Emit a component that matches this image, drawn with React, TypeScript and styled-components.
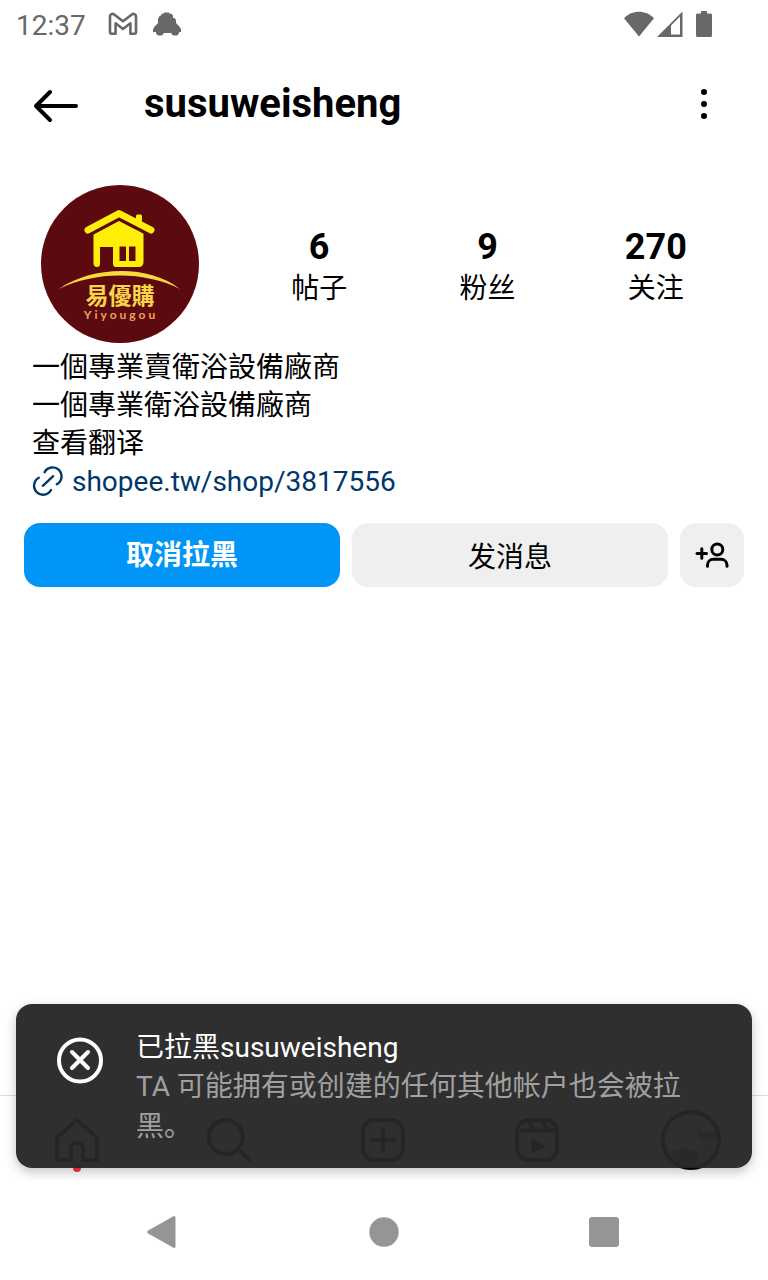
import React from 'react';
import styled, { createGlobalStyle } from 'styled-components';

const GlobalStyle = createGlobalStyle`
  *, *::before, *::after { box-sizing: border-box; }
  body {
    margin: 0;
    background: #fff;
    color: #000;
    font-family: Roboto, "Noto Sans CJK SC", sans-serif;
    font-size: 28px;
  }
  button {
    border: 0;
    padding: 0;
    background: none;
    color: inherit;
    font: inherit;
  }
  svg { display: block; flex: none; }
`;

const Screen = styled.div`
  display: flex;
  flex-direction: column;
  min-height: 100vh;
`;

const StatusBar = styled.div`
  display: flex;
  align-items: center;
  justify-content: space-between;
  height: 48px;
  padding: 0 56px 0 16px;
  color: #686868;
`;

const StatusGroup = styled.div<{ $gap: number }>`
  display: flex;
  align-items: center;
  gap: ${(p) => p.$gap}px;
`;

const Clock = styled.time`
  width: 78px;
  line-height: 46px;
  padding-top: 4px;
`;

const Header = styled.header`
  display: flex;
  align-items: center;
  height: 112px;
  padding: 0 40px 0 32px;
`;

const Title = styled.h1`
  flex: 1;
  margin: 0 0 0 64px;
  font-size: 40px;
  line-height: 48px;
  font-weight: 700;
`;

const IconButton = styled.button<{ $width: number }>`
  display: flex;
  align-items: center;
  justify-content: center;
  width: ${(p) => p.$width}px;
  height: 48px;
`;

const Summary = styled.section`
  display: flex;
  align-items: center;
  gap: 36px;
  padding: 25px 28px 0 41px;
`;

const Stats = styled.ul`
  flex: 1;
  display: grid;
  grid-template-columns: repeat(3, 1fr);
  margin: 0;
  padding: 8px 0 0;
  list-style: none;
  text-align: center;
`;

const StatValue = styled.strong`
  display: block;
  font-size: 36px;
  line-height: 42px;
  font-weight: 700;
`;

const StatLabel = styled.span`
  display: block;
  line-height: 42px;
`;

const Bio = styled.section`
  padding: 6px 32px 0;
`;

const BioLine = styled.p`
  margin: 0;
  line-height: 38px;
  font-family: Roboto, "Noto Sans CJK TC", sans-serif;
`;

const TranslateButton = styled.button`
  display: block;
  line-height: 38px;
`;

const SiteLink = styled.a`
  display: flex;
  width: fit-content;
  align-items: center;
  gap: 8px;
  line-height: 38px;
  color: #00376b;
  text-decoration: none;
`;

const Actions = styled.div`
  display: flex;
  gap: 12px;
  padding: 22px 24px 0;
`;

const ActionButton = styled.button<{ $primary?: boolean }>`
  flex: 1;
  height: 64px;
  padding-bottom: ${(p) => (p.$primary ? 4 : 0)}px;
  border-radius: 16px;
  background: ${(p) => (p.$primary ? '#0095f6' : '#efefef')};
  color: ${(p) => (p.$primary ? '#fff' : '#000')};
  font-weight: ${(p) => (p.$primary ? 700 : 400)};
`;

const SuggestButton = styled(ActionButton)`
  flex: 0 0 64px;
  display: flex;
  align-items: center;
  justify-content: center;
`;

const Footer = styled.footer`
  margin-top: auto;
`;

const TabBar = styled.nav`
  position: relative;
  display: grid;
  grid-template-columns: repeat(5, 1fr);
  align-items: center;
  justify-items: center;
  height: 89px;
  border-top: 1px solid #dbdbdb;
`;

const Tab = styled.button`
  position: relative;
  display: flex;
  align-items: center;
  justify-content: center;
  width: 60px;
  height: 60px;
`;

const UnreadDot = styled.span`
  position: absolute;
  bottom: -2px;
  left: 26px;
  width: 8px;
  height: 8px;
  border-radius: 50%;
  background: #ff3040;
`;

const Toast = styled.div`
  position: absolute;
  left: 16px;
  right: 16px;
  bottom: 16px;
  display: flex;
  gap: 32px;
  padding: 25px 48px 21px 40px;
  border-radius: 16px;
  background: rgba(38, 38, 38, 0.96);
  box-shadow: 0 4px 12px rgba(0, 0, 0, 0.24);
`;

const ToastIcon = styled.div`
  padding-top: 7px;
`;

const ToastTitle = styled.p`
  margin: 0;
  line-height: 38px;
  color: #fff;
`;

const ToastText = styled.p`
  margin: 0;
  line-height: 40px;
  color: #a0a0a0;
`;

const SystemNav = styled.nav`
  display: grid;
  grid-template-columns: repeat(3, 1fr);
  align-items: center;
  justify-items: center;
  height: 96px;
  padding: 0 52px;
  color: #959595;
`;

const MailIcon = () => (
  <svg width="30" height="24" viewBox="0 0 30 24" fill="none" stroke="currentColor" strokeWidth="2.6" strokeLinejoin="round">
    <path d="M2 4.5C2 2 4.5 1.200 6.500 2.700L15 9.300L23.500 2.700C25.500 1.200 28 2 28 4.500V20C28 21 27.300 21.700 26.300 21.700H22.400V11.300L15 17L7.600 11.300V21.700H3.700C2.700 21.700 2 21 2 20Z" />
  </svg>
);

const CarIcon = () => (
  <svg width="30" height="24" viewBox="0 0 30 24" fill="currentColor">
    <path d="M10 1.500H12V.5H17V1.500H19L21 3.500V6H22.500L24 8V11L27 14L29 17V20H27V21.500L25 23.500H21L19 21H12L10 23.500H6L4 21.500V20H1V17L3 14L6 11V7L7.500 4L9 3.500Z" />
  </svg>
);

const WifiIcon = () => (
  <svg width="30" height="26" viewBox="0 0 30 26" fill="currentColor">
    <path d="M0 7.200C8 -1.400 22 -1.400 30 7.200L15 25.500Z" />
  </svg>
);

const SignalIcon = () => (
  <svg width="26" height="26" viewBox="0 0 26 26">
    <path d="M0 26L25.500 .5V26Z" fill="currentColor" />
    <path d="M14 14.500L23 5.500V23.500H14Z" fill="#fff" />
  </svg>
);

const BatteryIcon = () => (
  <svg width="16" height="26" viewBox="0 0 16 26" fill="currentColor">
    <path d="M5 0H11V2.500H14.500Q16 2.500 16 4V24.500Q16 26 14.500 26H1.500Q0 26 0 24.500V4Q0 2.500 1.500 2.500H5Z" />
  </svg>
);

const BackIcon = () => (
  <svg width="48" height="44" viewBox="0 0 48 44" fill="none" stroke="currentColor" strokeWidth="4" strokeLinecap="round" strokeLinejoin="round">
    <path d="M18 10L4 24L18 38M4 24H44" />
  </svg>
);

const MoreIcon = () => (
  <svg width="48" height="48" viewBox="0 0 48 48" fill="currentColor">
    <circle cx="24" cy="12" r="3" />
    <circle cx="24" cy="24" r="3" />
    <circle cx="24" cy="36" r="3" />
  </svg>
);

const ShopAvatar = () => (
  <svg width="158" height="158" viewBox="0 0 158 158" role="img" aria-label="易優購 Yiyougou">
    <circle cx="79" cy="79" r="79" fill="#5c0a10" />
    <g fill="#ffee08">
      <path d="M95 38V31Q95 29.500 96.500 29.500H99.500Q101 29.500 101 31V41L95 38Z" />
      <path d="M47 45L78 28.500L110 45" fill="none" stroke="#ffee08" strokeWidth="7" strokeLinecap="round" strokeLinejoin="round" />
      <path d="M52.500 49L78 35.500L102.500 48V77Q102.500 82 97.500 82H75Q72 82 72 79V62H59V79Q59 82 56 82Q52.500 82 52.500 78Z" />
      <path d="M18 104C50 81 108 79 139 104C104 86 54 86 18 104Z" fill="#f8d93a" />
    </g>
    <path d="M49 50.500L78 35L107 50" fill="none" stroke="#5c0a10" strokeWidth="1.600" />
    <path d="M78.500 61.500H85V76H78.500ZM88 61.500H94.500V76H88Z" fill="#5c0a10" />
    <text x="79" y="119" textAnchor="middle" fontFamily="'Noto Sans CJK TC', sans-serif" fontSize="23" fontWeight="700" fill="#f8d548">易優購</text>
    <text x="80" y="134" textAnchor="middle" fontFamily="Lato, sans-serif" fontSize="12" fontWeight="700" letterSpacing="3" fill="#eda25a">Yiyougou</text>
  </svg>
);

const LinkIcon = () => (
  <svg width="32" height="32" viewBox="0 0 32 32" fill="none" stroke="currentColor" strokeWidth="2.4" strokeLinecap="round">
    <path d="M12.600 6.200A9 9 0 1 1 24.800 18.300" />
    <path d="M6.800 11.800A9 9 0 1 0 19 24" />
    <path d="M10.800 19.800L21.200 10.200" />
  </svg>
);

const AddPersonIcon = () => (
  <svg width="36" height="32" viewBox="0 0 36 32" fill="none" stroke="currentColor" strokeWidth="3" strokeLinecap="round">
    <path d="M3 14.500H12.500M7.800 9.800V19.300" />
    <circle cx="23.300" cy="10.500" r="5.500" />
    <path d="M13.500 27.200V26A5.800 5.800 0 0 1 19.300 20.300H27.200A5.800 5.800 0 0 1 33 26V27.200" />
  </svg>
);

const HomeIcon = () => (
  <svg width="48" height="48" viewBox="0 0 48 48" fill="none" stroke="currentColor" strokeWidth="4" strokeLinejoin="round">
    <path d="M4 44V21.500L24 4L44 21.500V44H30V32.500A6 6 0 0 0 18 32.500V44Z" />
  </svg>
);

const SearchIcon = () => (
  <svg width="48" height="48" viewBox="0 0 48 48" fill="none" stroke="currentColor" strokeWidth="4" strokeLinecap="round">
    <circle cx="19.700" cy="21" r="17" />
    <path d="M32.200 33.500L42.700 44" />
  </svg>
);

const CreateIcon = () => (
  <svg width="48" height="48" viewBox="0 0 48 48" fill="none" stroke="currentColor" strokeWidth="4" strokeLinecap="round">
    <rect x="3" y="4" width="40" height="40" rx="11" />
    <path d="M12 24H34M23 13V35" />
  </svg>
);

const ReelsIcon = () => (
  <svg width="48" height="48" viewBox="0 0 48 48" fill="none" stroke="currentColor" strokeWidth="4">
    <rect x="3" y="4" width="40" height="40" rx="11" />
    <path d="M4 14.500H43M14 4L20 14M27.500 4L33.500 14" />
    <path d="M18.500 24L29.500 30L18.500 36.500Z" fill="currentColor" strokeWidth="2" strokeLinejoin="round" />
  </svg>
);

const CatAvatar = () => (
  <svg width="60" height="60" viewBox="0 0 60 60">
    <circle cx="30" cy="30" r="28" fill="#eee" />
    <path d="M12 40Q22 35 34 40L42 34L36 27V18L42 22H50L56 19V38Q52 50 38 55H22Q12 50 10 42Z" fill="#ccc" />
    <path d="M12 41Q24 35 34 41Q40 48 35 55Q20 58 10 46Z" fill="#666" />
    <path d="M36 18L42 22H50L56 19V28L48 33L43 28L37 29Z" fill="#8c8178" />
    <circle cx="30" cy="30" r="28" fill="none" stroke="#000" strokeWidth="4" />
  </svg>
);

const DismissIcon = () => (
  <svg width="48" height="48" viewBox="0 0 48 48" fill="none" stroke="#fff" strokeWidth="4" strokeLinecap="round">
    <circle cx="24" cy="24.500" r="21" />
    <path d="M16 16L32 32M32 16L16 32" />
  </svg>
);

const SystemBackIcon = () => (
  <svg width="32" height="32" viewBox="0 0 32 32" fill="currentColor">
    <path d="M1.200 14.600L26 .4Q28.500 -.6 28.500 2V30Q28.500 32.600 26 31.600L1.200 17.400Q-1 16 1.200 14.600Z" />
  </svg>
);

const SystemHomeIcon = () => (
  <svg width="32" height="32" viewBox="0 0 32 32" fill="currentColor">
    <circle cx="16" cy="16" r="14.700" />
  </svg>
);

const SystemRecentsIcon = () => (
  <svg width="32" height="32" viewBox="0 0 32 32" fill="currentColor">
    <rect x="0" y="1" width="30" height="30" rx="3" />
  </svg>
);

const stats = [
  { value: '6', label: '帖子' },
  { value: '9', label: '粉丝' },
  { value: '270', label: '关注' },
];

export default function App() {
  return (
    <>
      <GlobalStyle />
      <Screen lang="zh-CN">
        <StatusBar>
          <StatusGroup $gap={14}>
            <Clock>12:37</Clock>
            <MailIcon />
            <CarIcon />
          </StatusGroup>
          <StatusGroup $gap={3}>
            <WifiIcon />
            <StatusGroup $gap={13}>
              <SignalIcon />
              <BatteryIcon />
            </StatusGroup>
          </StatusGroup>
        </StatusBar>

        <Header>
          <IconButton $width={48} aria-label="返回"><BackIcon /></IconButton>
          <Title>susuweisheng</Title>
          <IconButton $width={48} aria-label="更多"><MoreIcon /></IconButton>
        </Header>

        <main>
          <Summary>
            <ShopAvatar />
            <Stats>
              {stats.map((s) => (
                <li key={s.label}>
                  <StatValue>{s.value}</StatValue>
                  <StatLabel>{s.label}</StatLabel>
                </li>
              ))}
            </Stats>
          </Summary>

          <Bio>
            <BioLine lang="zh-TW">一個專業賣衛浴設備廠商</BioLine>
            <BioLine lang="zh-TW">一個專業衛浴設備廠商</BioLine>
            <TranslateButton>查看翻译</TranslateButton>
            <SiteLink href="https://shopee.tw/shop/3817556">
              <LinkIcon />
              shopee.tw/shop/3817556
            </SiteLink>
          </Bio>

          <Actions>
            <ActionButton $primary>取消拉黑</ActionButton>
            <ActionButton>发消息</ActionButton>
            <SuggestButton aria-label="推荐用户"><AddPersonIcon /></SuggestButton>
          </Actions>
        </main>

        <Footer>
          <TabBar>
            <Tab aria-label="首页">
              <HomeIcon />
              <UnreadDot />
            </Tab>
            <Tab aria-label="搜索"><SearchIcon /></Tab>
            <Tab aria-label="新建"><CreateIcon /></Tab>
            <Tab aria-label="Reels"><ReelsIcon /></Tab>
            <Tab aria-label="主页"><CatAvatar /></Tab>
            <Toast role="status">
              <ToastIcon><DismissIcon /></ToastIcon>
              <div>
                <ToastTitle>已拉黑susuweisheng</ToastTitle>
                <ToastText>TA 可能拥有或创建的任何其他帐户也会被拉黑。</ToastText>
              </div>
            </Toast>
          </TabBar>
          <SystemNav>
            <button aria-label="系统返回"><SystemBackIcon /></button>
            <button aria-label="主屏幕"><SystemHomeIcon /></button>
            <button aria-label="最近任务"><SystemRecentsIcon /></button>
          </SystemNav>
        </Footer>
      </Screen>
    </>
  );
}
